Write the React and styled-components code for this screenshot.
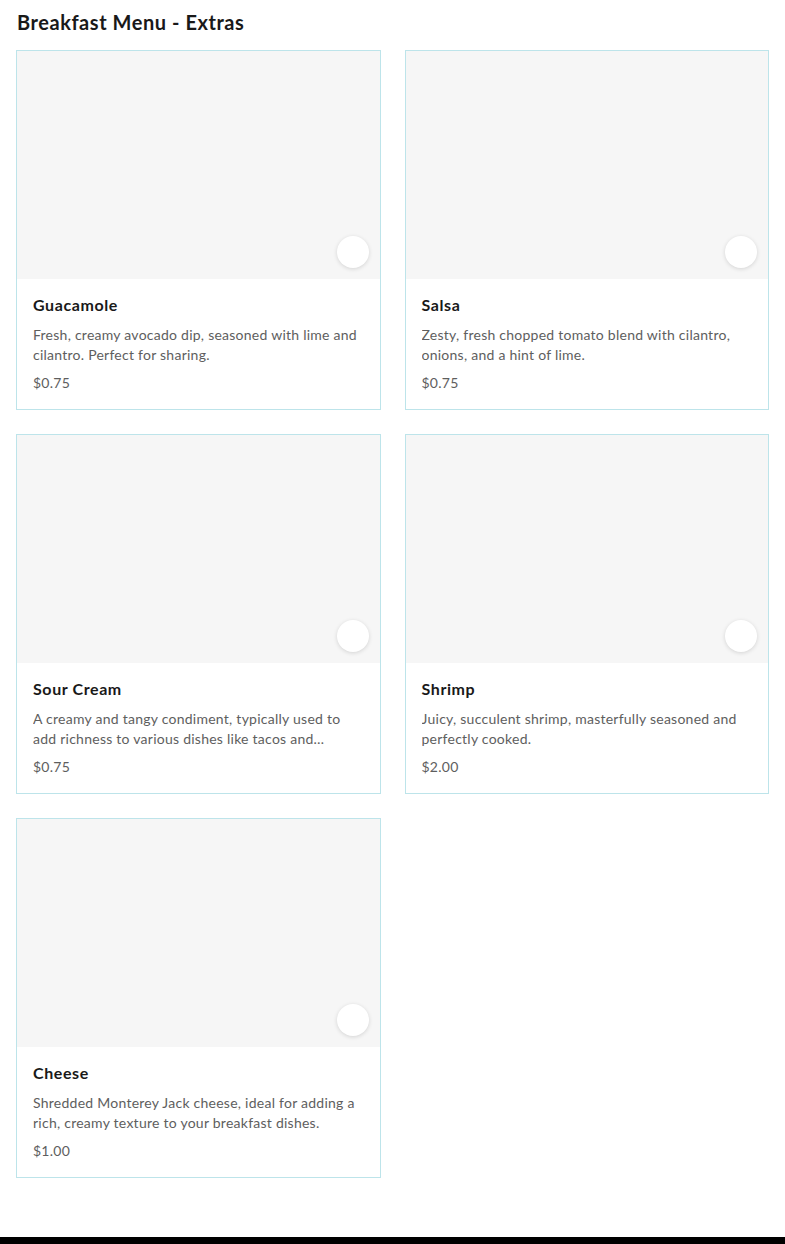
import styled, { createGlobalStyle } from "styled-components";

const GlobalStyle = createGlobalStyle`
  body {
    margin: 0;
    background: #ffffff;
    font-family: Lato, "Liberation Sans", sans-serif;
    color: #191919;
  }
`;

const Page = styled.div`
  padding: 0 16px;
`;

const Title = styled.h2`
  margin: 0;
  padding: 9px 0 15px 1px;
  font-size: 20px;
  line-height: 26px;
  font-weight: 700;
  letter-spacing: 0.55px;
  color: #191919;
`;

const Grid = styled.div`
  display: grid;
  grid-template-columns: 1fr 1fr;
  gap: 24px;
`;

const Card = styled.div`
  display: flex;
  flex-direction: column;
  height: 360px;
  box-sizing: border-box;
  border: 1px solid #bde4ea;
  background: #ffffff;
  overflow: hidden;
`;

const ImageArea = styled.div`
  position: relative;
  height: 228px;
  background: #f6f6f6;
`;

const AddButton = styled.div`
  position: absolute;
  right: 11px;
  bottom: 11px;
  width: 32px;
  height: 32px;
  border-radius: 50%;
  background: #ffffff;
  box-shadow: 0 1px 4px rgba(0, 0, 0, 0.14);
`;

const Body = styled.div`
  padding: 16px 16px 0 16px;
  display: flex;
  flex-direction: column;
`;

const ItemName = styled.div`
  font-size: 16px;
  line-height: 20px;
  font-weight: 700;
  letter-spacing: 0.6px;
  color: #191919;
  margin-bottom: 10px;
`;

const Description = styled.div`
  font-size: 14px;
  line-height: 20px;
  letter-spacing: 0.25px;
  color: #5e5e5e;
  display: -webkit-box;
  -webkit-line-clamp: 2;
  -webkit-box-orient: vertical;
  overflow: hidden;
  margin-bottom: 8px;
`;

const Price = styled.div`
  font-size: 14px;
  line-height: 20px;
  letter-spacing: 0.25px;
  color: #5e5e5e;
`;

const Footer = styled.div`
  margin-top: 59px;
  height: 8px;
  background: #000000;
`;

const items = [
  {
    name: "Guacamole",
    desc: "Fresh, creamy avocado dip, seasoned with lime and cilantro. Perfect for sharing.",
    price: "$0.75",
  },
  {
    name: "Salsa",
    desc: "Zesty, fresh chopped tomato blend with cilantro, onions, and a hint of lime.",
    price: "$0.75",
  },
  {
    name: "Sour Cream",
    desc: "A creamy and tangy condiment, typically used to add richness to various dishes like tacos and burritos.",
    price: "$0.75",
  },
  {
    name: "Shrimp",
    desc: "Juicy, succulent shrimp, masterfully seasoned and perfectly cooked.",
    price: "$2.00",
  },
  {
    name: "Cheese",
    desc: "Shredded Monterey Jack cheese, ideal for adding a rich, creamy texture to your breakfast dishes.",
    price: "$1.00",
  },
];

export default function App() {
  return (
    <>
      <GlobalStyle />
      <Page>
        <Title>Breakfast Menu - Extras</Title>
        <Grid>
          {items.map((item) => (
            <Card key={item.name}>
              <ImageArea>
                <AddButton />
              </ImageArea>
              <Body>
                <ItemName>{item.name}</ItemName>
                <Description>{item.desc}</Description>
                <Price>{item.price}</Price>
              </Body>
            </Card>
          ))}
        </Grid>
      </Page>
      <Footer />
    </>
  );
}
